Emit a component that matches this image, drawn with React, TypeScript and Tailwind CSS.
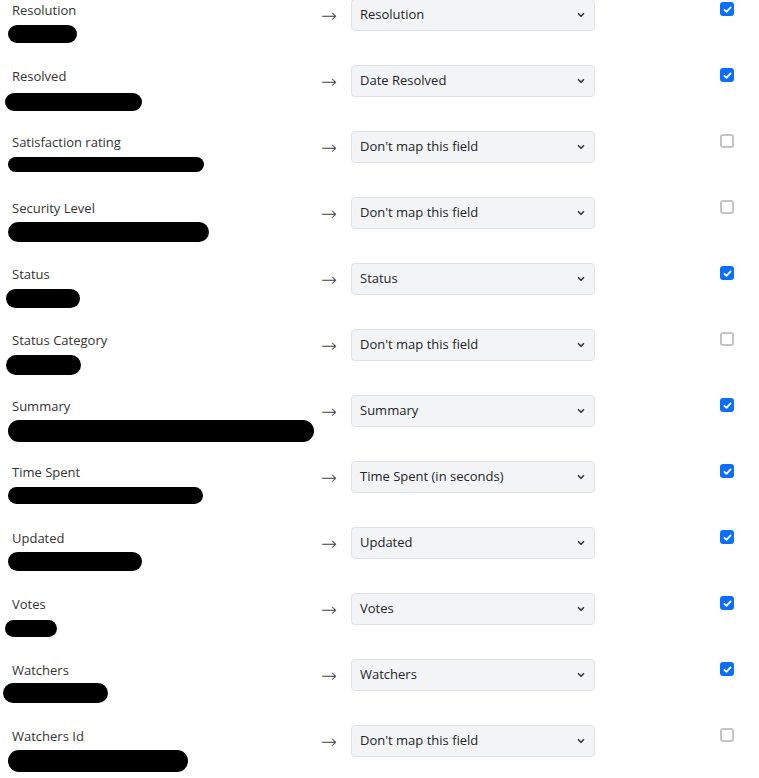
import { ChevronDown } from 'lucide-react';

interface FieldRow {
  label: string;
  mapped: string;
  checked: boolean;
  blob: { left: number; width: number; top: number; height: number };
}

const rows: FieldRow[] = [
  { label: 'Resolution', mapped: 'Resolution', checked: true, blob: { left: 8, width: 69, top: 25, height: 18 } },
  { label: 'Resolved', mapped: 'Date Resolved', checked: true, blob: { left: 5, width: 137, top: 27, height: 18 } },
  { label: 'Satisfaction rating', mapped: "Don't map this field", checked: false, blob: { left: 8, width: 196, top: 25, height: 15 } },
  { label: 'Security Level', mapped: "Don't map this field", checked: false, blob: { left: 8, width: 201, top: 24, height: 20 } },
  { label: 'Status', mapped: 'Status', checked: true, blob: { left: 6, width: 74, top: 25, height: 19 } },
  { label: 'Status Category', mapped: "Don't map this field", checked: false, blob: { left: 6, width: 75, top: 25, height: 20 } },
  { label: 'Summary', mapped: 'Summary', checked: true, blob: { left: 8, width: 306, top: 24, height: 22 } },
  { label: 'Time Spent', mapped: 'Time Spent (in seconds)', checked: true, blob: { left: 8, width: 195, top: 25, height: 17 } },
  { label: 'Updated', mapped: 'Updated', checked: true, blob: { left: 8, width: 134, top: 24, height: 19 } },
  { label: 'Votes', mapped: 'Votes', checked: true, blob: { left: 5, width: 52, top: 26, height: 17 } },
  { label: 'Watchers', mapped: 'Watchers', checked: true, blob: { left: 3, width: 105, top: 23, height: 20 } },
  { label: 'Watchers Id', mapped: "Don't map this field", checked: false, blob: { left: 8, width: 180, top: 24, height: 22 } },
];

export default function App() {
  return (
    <div className="h-[778px] w-[759px] overflow-hidden bg-white text-[#212529]" style={{ fontFamily: '"Open Sans", "Noto Sans", sans-serif' }}>
      {rows.map((row) => (
        <div key={row.label} className="flex h-[66px]">
          <div className="w-[312px] shrink-0">
            <div className="pl-3 text-[13px] leading-5 text-[#333]">{row.label}</div>
            <div
              className="rounded-full bg-black"
              style={{
                marginLeft: row.blob.left,
                width: row.blob.width,
                marginTop: row.blob.top - 20,
                height: row.blob.height,
              }}
            />
          </div>
          <div className="w-[39px] shrink-0 pl-[9px] font-['DejaVu_Sans',sans-serif] text-[19px] font-extralight leading-[30px] text-[#444]">→</div>
          <div className="-mt-px flex h-8 w-[244px] shrink-0 items-center justify-between rounded border border-[#dee2e6] bg-[#f3f4f6] pl-2 pr-2 text-[13px] text-[#212529]">
            <span>{row.mapped}</span>
            <ChevronDown className="h-[10px] w-[10px] text-[#343a40]" strokeWidth={4} />
          </div>
          <div className="w-[125px] shrink-0" />
          <div className="pt-[2px]">
            {row.checked ? (
              <div className="flex h-[14px] w-[14px] items-center justify-center rounded-[3px] bg-[#0d6efd]">
                <svg viewBox="0 0 16 16" className="h-[11px] w-[11px]">
                  <path d="M3.5 8.5l3 3 6-6.5" fill="none" stroke="white" strokeWidth="2.6" strokeLinecap="round" strokeLinejoin="round" />
                </svg>
              </div>
            ) : (
              <div className="h-[14px] w-[14px] rounded-[3px] border-2 border-[#c4c4c4] bg-white" />
            )}
          </div>
        </div>
      ))}
    </div>
  );
}
